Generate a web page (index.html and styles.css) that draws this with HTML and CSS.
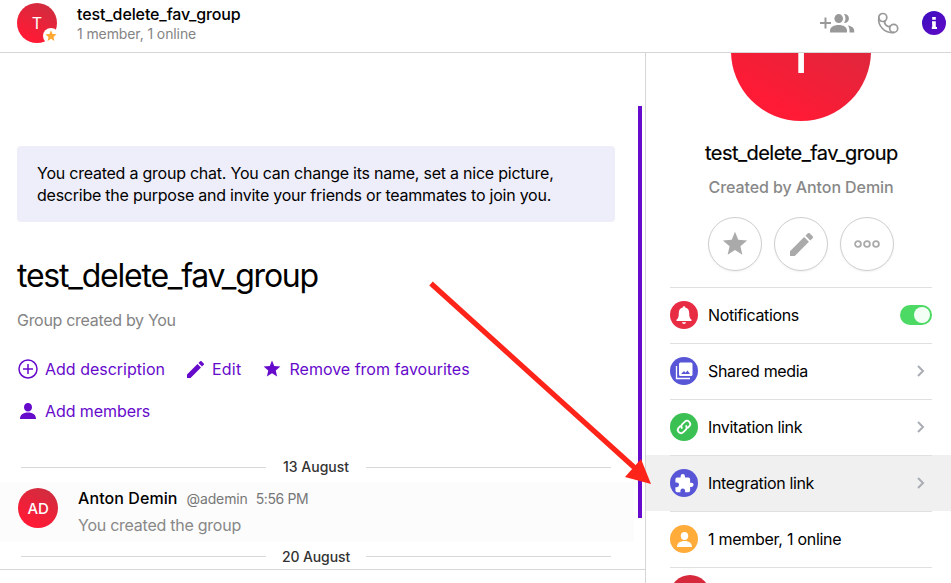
FILE: index.html
```
<!DOCTYPE html>
<html lang="en">
<head>
<meta charset="utf-8">
<title>test_delete_fav_group</title>
<link rel="stylesheet" href="styles.css">
</head>
<body>
<svg class="defs" width="0" height="0">
  <symbol id="star" viewBox="0 0 24 24"><path d="M12 17.6 18.8 22 17 14 23.200 8.700 15 8 12 .6 9 8 .8 8.700 7 14 5.200 22z"/></symbol>
  <symbol id="pencil" viewBox="3 3 18 18"><path d="M3 17.250V21h3.750L17.810 9.940l-3.750-3.750L3 17.250zM20.710 7.040a1 1 0 0 0 0-1.410l-2.340-2.340a1 1 0 0 0-1.410 0l-1.830 1.830 3.750 3.750 1.830-1.830z"/></symbol>
  <symbol id="person" viewBox="0 0 16 16"><path d="M8 0c2.500 0 4 1.700 4 4.200S10.400 8.500 8 8.500 4 6.700 4 4.200 5.500 0 8 0zM0 16c0-4 3-6.400 8-6.400s8 2.400 8 6.400z"/></symbol>
  <symbol id="chevron" viewBox="0 0 8 12"><path d="M1 1l5 5-5 5" fill="none" stroke="#a9aeb5" stroke-width="2"/></symbol>
</svg>
<div class="app">
  <header class="header">
    <div class="avatar avatar-header">T
      <span class="fav-badge"><svg width="12" height="12"><use href="#star"/></svg></span>
    </div>
    <div class="header-info">
      <div class="header-title">test_delete_fav_group</div>
      <div class="header-status">1 member, 1 online</div>
    </div>
    <div class="header-actions">
      <svg class="act-add" width="36" height="24" viewBox="0 0 36 24" fill="#999"><path d="M0 11h4.500V6.500h2V11H11v2H6.500v4.500h-2V13H0z"/><ellipse cx="18.700" cy="7.600" rx="4.300" ry="4.500"/><path d="M10 21.500v-1.800c0-3.600 4-5.700 8.700-5.700s8.300 2.100 8.300 5.700v1.800zM24 3.100c3 0 4.900 1.700 4.900 4.500s-1.900 4.500-4.900 4.500c2-2.600 2-6.400 0-9zM28 14.400c3.800.5 6.200 2.500 6.200 5.300v1.800H29.500v-1.800c0-2-.5-3.900-1.500-5.300z"/></svg>
      <svg class="act-call" width="24" height="24" viewBox="0 0 24 24" fill="none" stroke="#999" stroke-width="1.700"><circle cx="6.800" cy="6.500" r="4"/><circle cx="17.700" cy="17.400" r="4"/><path d="M3 6C1 14.500 9 23 18.500 21.300M9.400 9.500c-2.600 2.800 2.400 8 5.400 5.100"/></svg>
      <svg class="act-info" width="24" height="24" viewBox="0 0 24 24"><defs><linearGradient id="ig" x1="0" y1="0" x2="1" y2="1"><stop offset="0" stop-color="#3a0fbd"/><stop offset="1" stop-color="#6209c8"/></linearGradient></defs><circle cx="12" cy="12" r="12" fill="url(#ig)"/><path fill="#fff" d="M10.200 6h3.600v2.800h-3.600zM10 10.300h3.800V16H15v2H9.800v-2h.4v-3.700H10z"/></svg>
    </div>
  </header>
  <div class="body">
    <main class="chat">
      <div class="scroll">
        <div class="notice">You created a group chat. You can change its name, set a nice picture,<br>describe the purpose and invite your friends or teammates to join you.</div>
        <h1 class="title">test_delete_fav_group</h1>
        <p class="created">Group created by You</p>
        <div class="links">
          <a class="link"><svg width="20" height="20" fill="none" stroke="currentColor" stroke-width="1.500"><circle cx="10" cy="10" r="9"/><path d="M10 5v10M5 10h10"/></svg><span>Add description</span></a>
          <a class="link link-edit"><svg width="17" height="17" fill="currentColor"><use href="#pencil"/></svg><span>Edit</span></a>
          <a class="link link-fav"><svg width="18" height="18" fill="currentColor"><use href="#star"/></svg><span>Remove from favourites</span></a>
        </div>
        <div class="links links-second">
          <a class="link link-members"><svg width="16" height="16" fill="currentColor"><use href="#person"/></svg><span>Add members</span></a>
        </div>
        <div class="date"><span>13 August</span></div>
        <div class="message">
          <div class="avatar avatar-msg">AD</div>
          <div class="message-body">
            <div class="message-head"><b>Anton Demin</b><span class="nick">@ademin</span><span class="time">5:56 PM</span></div>
            <div class="message-text">You created the group</div>
          </div>
        </div>
        <div class="date date-last"><span>20 August</span></div>
      </div>
      <div class="composer"></div>
      <div class="scrollbar"></div>
    </main>
    <aside class="panel">
      <div class="avatar avatar-big">T</div>
      <h2 class="panel-title">test_delete_fav_group</h2>
      <p class="panel-sub">Created by Anton Demin</p>
      <div class="buttons">
        <span class="round"><svg width="26" height="26"><use href="#star"/></svg></span>
        <span class="round"><svg width="23" height="23"><use href="#pencil"/></svg></span>
        <span class="round"><svg width="26" height="8" fill="none" stroke="#aaa" stroke-width="1.800"><circle cx="4" cy="4" r="2.900"/><circle cx="13" cy="4" r="2.900"/><circle cx="22" cy="4" r="2.900"/></svg></span>
      </div>
      <ul class="rows">
        <li><i class="ico red"><svg width="28" height="28" fill="#fff"><path d="M14 5.200c.8 0 1.200.5 1.300 1.300 2.500.6 3.900 2.600 3.900 5.400 0 4 .7 5.600 2.300 6.800.2.900-.1 1.300-.8 1.300H7.300c-.7 0-1-.4-.8-1.300 1.600-1.200 2.300-2.800 2.300-6.800 0-2.800 1.400-4.800 3.900-5.400.1-.8.500-1.300 1.300-1.300zM12 21.300h4c-.1 1.100-.9 1.700-2 1.700s-1.900-.6-2-1.700z"/></svg></i><span>Notifications</span><em class="toggle"></em></li>
        <li><i class="ico blue"><svg width="28" height="28"><path d="M6.500 9v12.500H20" fill="none" stroke="#fff" stroke-width="1.300"/><path fill="#fff" fill-rule="evenodd" d="M10.500 5.500h10.500a1.500 1.500 0 0 1 1.500 1.500v10.500a1.500 1.500 0 0 1-1.500 1.500H10.500a1.500 1.500 0 0 1-1.500-1.500V7A1.500 1.500 0 0 1 10.500 5.500zM11 17h9l-2.500-3.500-2 2.200-1.500-1.600z"/></svg></i><span>Shared media</span><svg class="chev" width="8" height="12"><use href="#chevron"/></svg></li>
        <li><i class="ico green"><svg width="28" height="28" fill="none" stroke="#fff" stroke-width="1.800" stroke-linecap="round"><g transform="rotate(-45 14 14)"><path d="M15 16.800H9.500a2.800 2.800 0 0 1 0-5.600H13M13 11.200a2.800 2.800 0 0 1 2.600 2.800M13 11.200h5.500a2.800 2.800 0 0 1 0 5.600H15M15 16.800a2.800 2.800 0 0 1-2.600-2.800" stroke="none"/><path d="M12 10.800H9.800a3.200 3.200 0 0 0 0 6.400h3.400a3.200 3.200 0 0 0 3.100-2.400M16 17.200h2.200a3.200 3.200 0 0 0 0-6.400h-3.400a3.200 3.200 0 0 0-3.100 2.400"/></g></svg></i><span>Invitation link</span><svg class="chev" width="8" height="12"><use href="#chevron"/></svg></li>
        <li class="active"><i class="ico blue"><svg width="19" height="19" viewBox="1.500 1 22 22" fill="#fff"><path d="M20.500 11H19V7a2 2 0 0 0-2-2h-4V3.500a2.500 2.500 0 0 0-5 0V5H4a2 2 0 0 0-2 2v3.800h1.500a2.700 2.700 0 0 1 0 5.400H2V20a2 2 0 0 0 2 2h3.800v-1.500a2.700 2.700 0 0 1 5.400 0V22H17a2 2 0 0 0 2-2v-4h1.500a2.500 2.500 0 0 0 0-5z"/></svg></i><span>Integration link</span><svg class="chev" width="8" height="12"><use href="#chevron"/></svg></li>
        <li><i class="ico orange"><svg width="15" height="15" fill="#fff"><use href="#person"/></svg></i><span class="count">1 member, 1 online</span></li>
        <li class="member"><div class="avatar avatar-member"></div></li>
      </ul>
    </aside>
  </div>
  <svg class="arrow" width="951" height="583"><path d="M431 283.500 636 469" stroke="#ff2419" stroke-width="5.200"/><path d="M651 484 625 477 641 459z" fill="#ff2419"/></svg>
</div>
</body>
</html>
```
FILE: styles.css
```
* { box-sizing: border-box; }
body { margin: 0; background: #fff; color: #000; font-family: Inter, "Liberation Sans", sans-serif; font-size: 16px; }
h1, h2, p, ul { margin: 0; padding: 0; font-weight: 400; list-style: none; }
.defs { position: absolute; }
.app { width: 951px; height: 583px; display: flex; flex-direction: column; overflow: hidden; position: relative; white-space: nowrap; }
.arrow { position: absolute; left: 0; top: 0; }

.avatar { border-radius: 50%; background: linear-gradient(28deg, #ff1a35 18%, #ca2f40 98%); color: #fff; display: flex; align-items: center; justify-content: center; flex: none; }

.header { height: 53px; flex: none; border-bottom: 1px solid #d6d6d6; display: flex; padding-left: 17px; padding-right: 5px; }
.avatar-header { width: 40px; height: 40px; margin-top: 3px; font-size: 16px; position: relative; }
.fav-badge { position: absolute; right: -2px; bottom: -1px; width: 16px; height: 16px; border-radius: 50%; background: #fff; display: flex; align-items: center; justify-content: center; fill: #ffa733; }
.header-info { margin-left: 20px; padding-top: 4px; flex: 1; }
.header-title { font-size: 16px; font-weight: 500; line-height: 20px; letter-spacing: -.11px; }
.header-status { font-size: 14px; line-height: 20px; color: #848484; letter-spacing: -.1px; }
.header-actions { display: flex; align-items: center; padding-bottom: 6px; }
.act-call { margin-left: 20px; }
.act-info { margin-left: 22px; }

.body { flex: 1; display: flex; min-height: 0; }
.chat { width: 645px; display: flex; flex-direction: column; position: relative; }
.scroll { flex: 1; padding-top: 93px; }
.notice { margin: 0 30px 0 17px; height: 76px; padding: 16px 20px; background: #eeedfa; border-radius: 4px; line-height: 22px; font-size: 16px; letter-spacing: -.235px; }
.title { margin: 34px 0 0 17px; font-size: 32px; line-height: 40px; letter-spacing: -1.22px; }
.created { margin: 14px 0 0 17px; line-height: 20px; color: #848484; letter-spacing: -.3px; }
.links { display: flex; padding-left: 18px; margin-top: 29px; height: 20px; color: #660acb; }
.links-second { margin-top: 22px; }
.link { display: flex; align-items: center; line-height: 20px; }
.link svg { margin-right: 7px; }
.link-edit { margin-left: 22px; letter-spacing: .25px; }
.link-edit svg { margin-right: 8px; }
.link-fav { margin-left: 22px; }
.link-fav svg { margin-right: 8px; }
.link-members { padding-left: 2px; letter-spacing: -.08px; }
.link-members svg { margin-right: 9px; }
.date { display: flex; align-items: center; height: 30px; margin: 31px 34px 0 21px; font-size: 14px; font-weight: 500; color: #333; gap: 17px; line-height: 16px; }
.date > span { margin-top: -1px; }
.date::before, .date::after { content: ""; flex: 1; height: 1px; background: #d8d8d8; }
.date-last { margin-top: 0; height: 27px; padding-top: 2px; gap: 16px; }
.date-last > span { margin-top: 0; letter-spacing: -.1px; }
.message { height: 60px; margin-right: 11px; background: #fcfcfc; display: flex; padding-left: 18px; }
.avatar-msg { width: 40px; height: 40px; margin-top: 6px; font-size: 15px; font-weight: 500; letter-spacing: -.3px; }
.message-body { margin-left: 20px; padding-top: 6px; }
.message-head { display: flex; align-items: center; height: 20px; font-size: 14px; color: #777; }
.message-head b { font-size: 16px; font-weight: 500; color: #000; letter-spacing: .08px; }
.nick { margin-left: 9px; letter-spacing: -.12px; }
.time { margin-left: 8px; letter-spacing: -.4px; }
.message-text { margin-top: 7px; line-height: 20px; color: #888; letter-spacing: -.25px; }
.composer { height: 14px; border-top: 1px solid #d6d6d6; flex: none; }
.scrollbar { position: absolute; left: 638px; top: 53px; width: 4px; height: 412px; background: #660acb; }

.panel { flex: 1; border-left: 1px solid #d6d6d6; overflow: hidden; }
.avatar-big { width: 140px; height: 140px; margin: -72px 0 0 85px; font-size: 60px; }
.panel-title { margin: 19px 0 0; padding-left: 59px; line-height: 26px; font-size: 20px; letter-spacing: -.54px; -webkit-text-stroke: .2px #000; }
.panel-sub { margin: 11px 0 0; padding-left: 62.500px; line-height: 20px; color: #888; font-weight: 500; letter-spacing: -.08px; }
.buttons { display: flex; gap: 12px; margin: 20px 0 0 62px; }
.round { width: 54px; height: 54px; border: 1px solid #cecece; border-radius: 50%; display: flex; align-items: center; justify-content: center; fill: #aaa; box-shadow: 0 1px 2px #0001; }
.rows { margin-top: 16px; letter-spacing: -.35px; }
.rows li { height: 56px; display: flex; align-items: center; padding: 0 19px 0 24px; background: linear-gradient(#e0e0e0, #e0e0e0) 24px 0 / 262px 1px no-repeat; }
.rows .active { background-color: #f0f0f0; }
.count { letter-spacing: -.27px; }
.ico { width: 28px; height: 28px; border-radius: 50%; margin-right: 10px; display: flex; align-items: center; justify-content: center; }
.red { background: #e72c44; }
.blue { background: #5856d6; }
.green { background: #3bc054; }
.orange { background: #ffac3b; }
.chev { margin-left: auto; margin-right: 7.500px; }
.toggle { margin-left: auto; width: 32px; height: 20px; border-radius: 10px; background: #4cd964; padding: 2px; display: flex; justify-content: flex-end; }
.toggle::after { content: ""; width: 16px; height: 16px; border-radius: 50%; background: #f3fff5; }
.rows .member { align-items: flex-start; padding-top: 8px; }
.avatar-member { width: 40px; height: 40px; background: #d62a3c; }
```
